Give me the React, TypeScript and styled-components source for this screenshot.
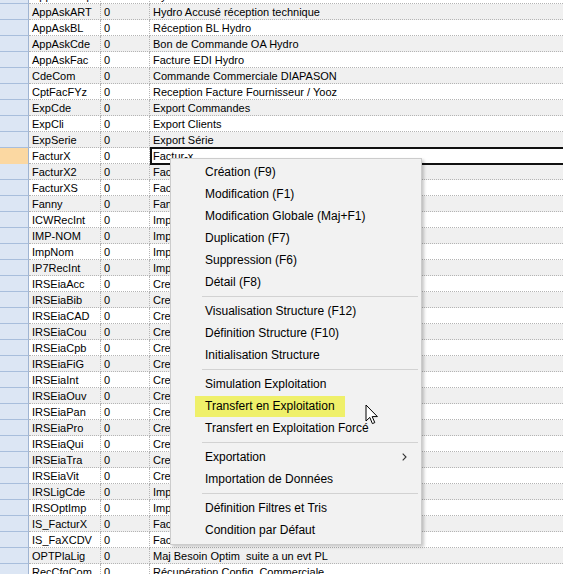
import React from 'react';
import styled, { createGlobalStyle } from 'styled-components';

const GlobalStyle = createGlobalStyle`
  html, body {
    margin: 0;
    padding: 0;
    background: #ffffff;
    overflow: hidden;
  }
`;

const Page = styled.div`
  position: relative;
  width: 563px;
  height: 574px;
  overflow: hidden;
  font-family: "Liberation Sans", Arial, sans-serif;
`;

const Grid = styled.div`
  display: flex;
  flex-direction: column;
  margin-top: -12px; // first row is cut by the top of the window
`;

const Row = styled.div`
  display: grid;
  grid-template-columns: 29px 72px 49px 1fr;
  height: 16px;
`;

const RowHeader = styled.div<{ $current?: boolean }>`
  background: ${(p) => (p.$current ? '#fbd8a2' : '#dce6f4')};
  border-bottom: 1px solid #a8bedc;
  border-right: 1px solid #9fb4d2;
  box-sizing: border-box;
`;

const Cell = styled.div<{ $odd: boolean; $last?: boolean; $focus?: boolean }>`
  box-sizing: border-box;
  height: 16px;
  background: ${(p) => (p.$odd ? '#f0f0f0' : '#ffffff')};
  border-bottom: 1px dotted #b4b4b4;
  border-right: ${(p) => (p.$last ? 'none' : '1px dotted #b4b4b4')};
  padding: 1px 0 0 3px;
  font-size: 11px;
  line-height: 14px;
  color: #000;
  white-space: pre;
  overflow: hidden;
  ${(p) =>
    p.$focus &&
    `
    border: 2px solid #111;
    margin-top: -1px;
    width: calc(100% + 10px);
    height: 18px;
    padding: 0 0 0 1px;
    background: #fff;
    position: relative;
    z-index: 1;
  `}
`;

const Menu = styled.div`
  position: absolute;
  left: 170px;
  top: 158px;
  width: 252px;
  box-sizing: border-box;
  padding: 2px 2px 3px 2px;
  background: #f2f2f2;
  border: 1px solid #cccccc;
  box-shadow: 2px 2px 3px rgba(0, 0, 0, 0.22);
  font-family: "Segoe UI", "Liberation Sans", Arial, sans-serif;
  font-size: 12px;
  color: #000;
  z-index: 2;
`;

const Item = styled.div`
  display: flex;
  align-items: center;
  justify-content: space-between;
  height: 22px;
  padding: 0 12px 0 32px;
  white-space: nowrap;
`;

const Marked = styled.span`
  background: #eff06a;
  margin-left: -10px;
  padding: 3px 10px 4px 10px;
`;

const Separator = styled.div`
  height: 1px;
  margin: 3px 1px 3px 29px;
  background: #d2d2d2;
`;

const Cursor = styled.svg`
  position: absolute;
  left: 365px;
  top: 404px;
  z-index: 3;
`;

const rows: [string, string][] = [
  ['AppAskAcq', 'Hydro Accusé de commande'],
  ['AppAskART', 'Hydro Accusé réception technique'],
  ['AppAskBL', 'Réception BL Hydro'],
  ['AppAskCde', 'Bon de Commande OA Hydro'],
  ['AppAskFac', 'Facture EDI Hydro'],
  ['CdeCom', 'Commande Commerciale DIAPASON'],
  ['CptFacFYz', 'Reception Facture Fournisseur / Yooz'],
  ['ExpCde', 'Export Commandes'],
  ['ExpCli', 'Export Clients'],
  ['ExpSerie', 'Export Série'],
  ['FacturX', 'Factur-x'],
  ['FacturX2', 'Factur-x V2'],
  ['FacturXS', 'Factur-x Signature'],
  ['Fanny', 'Fanny'],
  ['ICWRecInt', 'Import Réception Interne'],
  ['IMP-NOM', 'Import Nomenclature'],
  ['ImpNom', 'Import Nomenclatures'],
  ['IP7RecInt', 'Import Réception Interne'],
  ['IRSEiaAcc', 'Creation Accessoires'],
  ['IRSEiaBib', 'Creation Bibliothèque'],
  ['IRSEiaCAD', 'Creation CAD'],
  ['IRSEiaCou', 'Creation Couleurs'],
  ['IRSEiaCpb', 'Creation Compatibilité'],
  ['IRSEiaFiG', 'Creation Fichier G'],
  ['IRSEiaInt', 'Creation Intercalaires'],
  ['IRSEiaOuv', 'Creation Ouvrants'],
  ['IRSEiaPan', 'Creation Panneaux'],
  ['IRSEiaPro', 'Creation Profilés'],
  ['IRSEiaQui', 'Creation Quincaillerie'],
  ['IRSEiaTra', 'Creation Traverses'],
  ['IRSEiaVit', 'Creation Vitrages'],
  ['IRSLigCde', 'Import Lignes Commande'],
  ['IRSOptImp', 'Import Optimisation'],
  ['IS_FacturX', 'Factur-x IS'],
  ['IS_FaXCDV', 'Factur-x CDV'],
  ['OPTPlaLig', 'Maj Besoin Optim  suite a un evt PL'],
  ['RecCfgCom', 'Récupération Config. Commerciale'],
];

type Entry = { label: string; marked?: boolean; sub?: boolean } | 'sep';

const menu: Entry[] = [
  { label: 'Création (F9)' },
  { label: 'Modification (F1)' },
  { label: 'Modification Globale (Maj+F1)' },
  { label: 'Duplication (F7)' },
  { label: 'Suppression (F6)' },
  { label: 'Détail (F8)' },
  'sep',
  { label: 'Visualisation Structure (F12)' },
  { label: 'Définition Structure (F10)' },
  { label: 'Initialisation Structure' },
  'sep',
  { label: 'Simulation Exploitation' },
  { label: 'Transfert en Exploitation', marked: true },
  { label: 'Transfert en Exploitation Forcé' },
  'sep',
  { label: 'Exportation', sub: true },
  { label: 'Importation de Données' },
  'sep',
  { label: 'Définition Filtres et Tris' },
  { label: 'Condition par Défaut' },
];

const Chevron = () => (
  <svg width="5" height="8" viewBox="0 0 5 8">
    <path d="M0.7 0.7 L4 4 L0.7 7.3" fill="none" stroke="#333" strokeWidth="1.1" />
  </svg>
);

export default function App() {
  return (
    <Page>
      <GlobalStyle />
      <Grid>
        {rows.map(([name, desc], i) => {
          const odd = i % 2 === 1;
          const current = name === 'FacturX';
          return (
            <Row key={name}>
              <RowHeader $current={current} />
              <Cell $odd={odd}>{name}</Cell>
              <Cell $odd={odd}>0</Cell>
              <Cell $odd={odd} $last $focus={current}>
                {desc}
              </Cell>
            </Row>
          );
        })}
      </Grid>

      <Menu>
        {menu.map((e, i) =>
          e === 'sep' ? (
            <Separator key={i} />
          ) : (
            <Item key={i}>
              {e.marked ? <Marked>{e.label}</Marked> : <span>{e.label}</span>}
              {e.sub && <Chevron />}
            </Item>
          )
        )}
      </Menu>

      <Cursor width="14" height="22" viewBox="0 0 14 22">
        <path
          d="M1 1 L1 17 L4.8 13.4 L7.4 19.6 L9.8 18.6 L7.2 12.6 L12.4 12.6 Z"
          fill="#fff"
          stroke="#000"
          strokeWidth="1"
          strokeLinejoin="round"
        />
      </Cursor>
    </Page>
  );
}
